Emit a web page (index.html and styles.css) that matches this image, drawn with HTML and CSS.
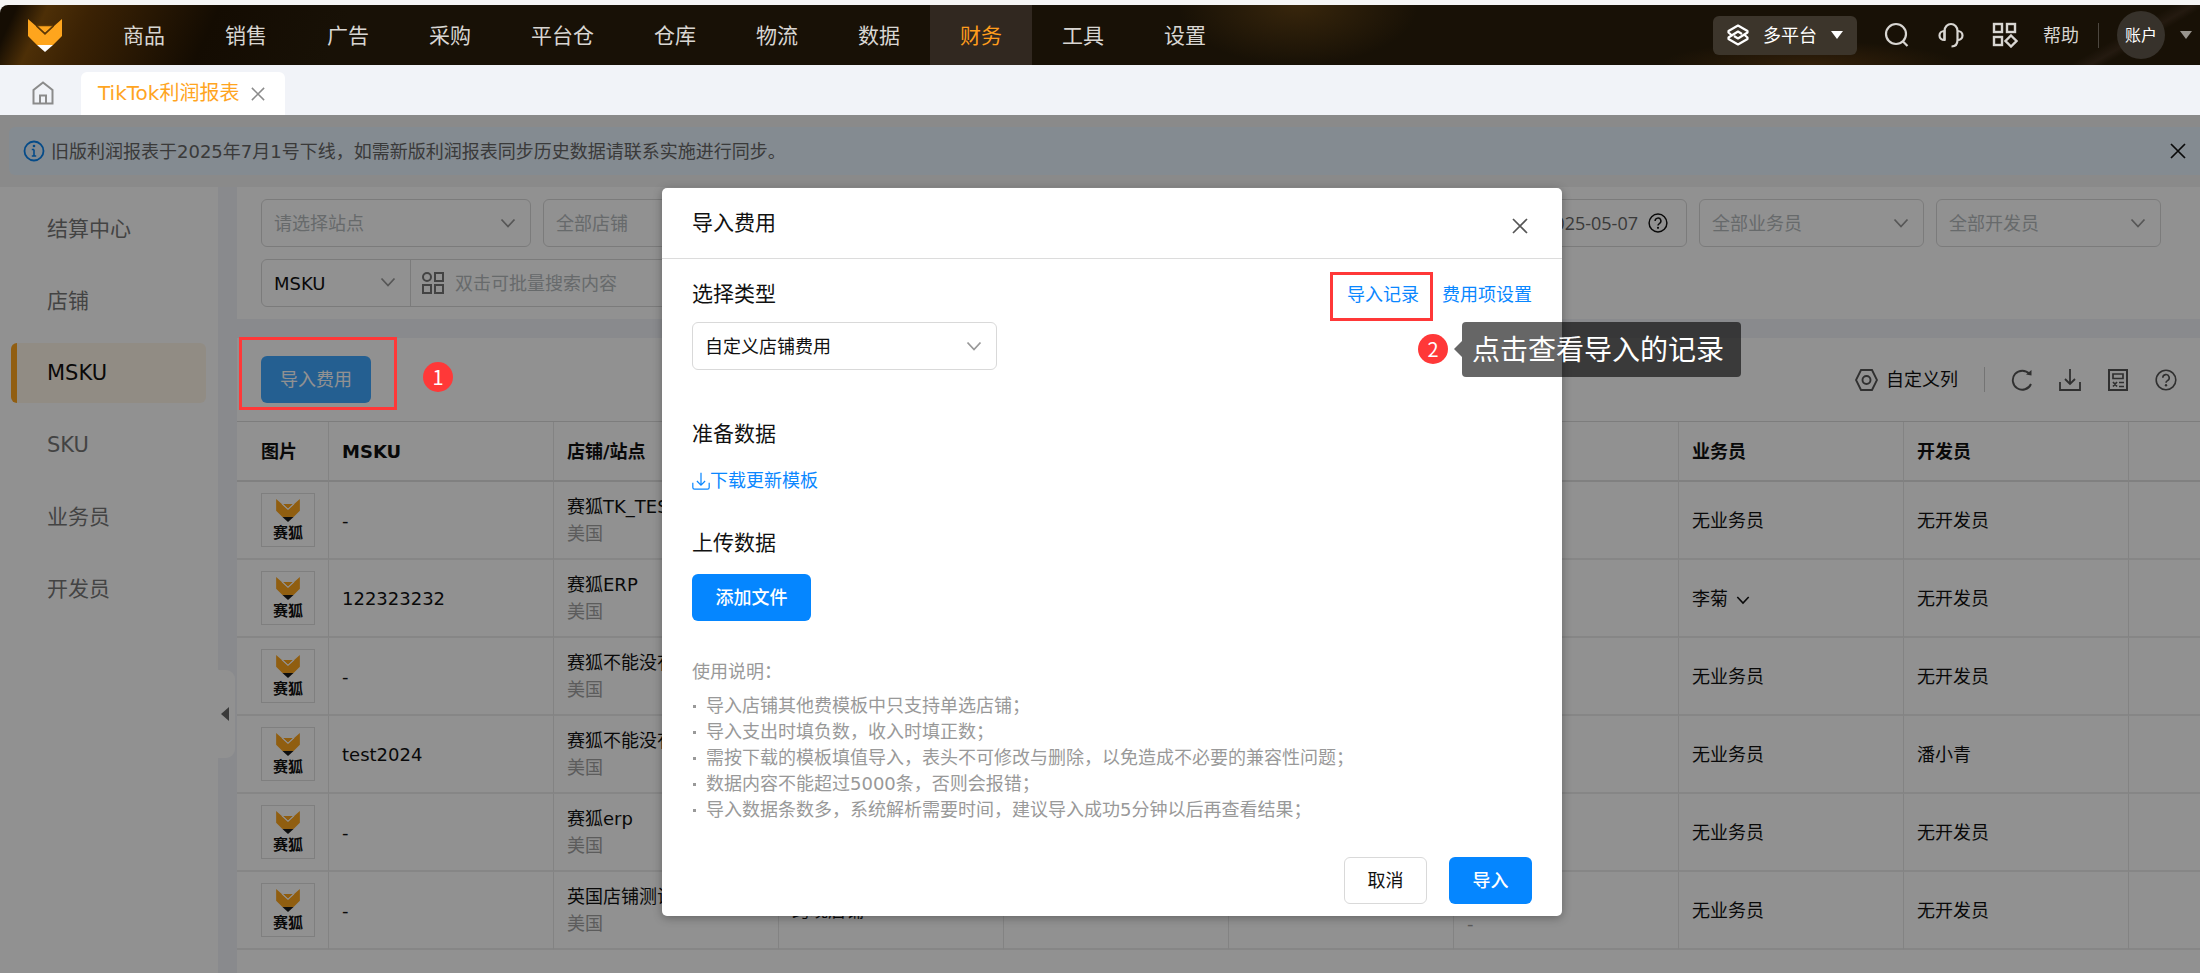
FILE: index.html
```html
<!DOCTYPE html>
<html lang="zh-CN">
<head>
<meta charset="utf-8">
<title>TikTok利润报表</title>
<link rel="stylesheet" href="styles.css">
</head>
<body>
<svg class="defs" aria-hidden="true">
  <symbol id="chevron" viewBox="0 0 16 16"><path d="M1.500 4.500 8 11.500l6.500-7" fill="none" stroke="currentColor" stroke-width="1.800"/></symbol>
  <symbol id="cross" viewBox="0 0 16 16"><path d="M1 1l14 14M15 1 1 15" fill="none" stroke="currentColor" stroke-width="1.700"/></symbol>
  <symbol id="caret" viewBox="0 0 12 8"><path d="M0 0h12L6 8z" fill="currentColor"/></symbol>
  <symbol id="help" viewBox="0 0 22 22"><g fill="none" stroke="currentColor" stroke-width="1.600"><circle cx="11" cy="11" r="9.800"/><path d="M7.800 8.800a3.200 3.200 0 1 1 4.700 2.800c-1 .6-1.500 1.100-1.500 2.200"/></g><circle cx="11" cy="16.300" r="1.200" fill="currentColor"/></symbol>
  <symbol id="download" viewBox="0 0 22 22"><path d="M1 13v8h20v-8M11 0v15M6 10l5 5 5-5" fill="none" stroke="currentColor" stroke-width="1.800"/></symbol>
  <symbol id="fox" viewBox="0 0 34 33"><path class="fox-face" d="M0 0 17 15 34 0v17L25 26H9L0 17z"/><path class="fox-brow" d="M9 6.500h16L17 14z"/><path class="fox-line" d="M9 6.500h16M8.500 7 17 14.800 25.500 7"/><path class="fox-tip" d="M9 26h16l-8 7z"/></symbol>
</svg>

<header class="topbar">
  <a class="brand" href="#" aria-label="赛狐"><svg class="fox fox-lg"><use href="#fox"/></svg></a>
  <nav class="nav">
    <a href="#">商品</a><a href="#">销售</a><a href="#">广告</a><a href="#">采购</a><a href="#">平台仓</a><a href="#">仓库</a><a href="#">物流</a><a href="#">数据</a><a href="#" class="current">财务</a><a href="#">工具</a><a href="#">设置</a>
  </nav>
  <div class="top-tools">
    <button class="platform" type="button">
      <svg width="22" height="22" viewBox="0 0 22 22"><g fill="none" stroke="currentColor" stroke-width="2.200" stroke-linejoin="round"><path d="M5 11.500 1.500 8.500V7L11 1.500 20.500 7v1.500L11 14.500 7 12"/><path d="M17 10.500l3.500 3v1.500L11 20.500 1.500 15v-1.500L11 7.500 15 10"/></g></svg>
      多平台
      <svg class="caret"><use href="#caret"/></svg>
    </button>
    <button class="icon-btn" type="button" aria-label="搜索"><svg width="26" height="26" viewBox="0 0 26 26"><g fill="none" stroke="currentColor" stroke-width="2.200"><circle cx="12" cy="12" r="10"/><path d="m18.500 19 5 5"/></g></svg></button>
    <button class="icon-btn" type="button" aria-label="客服"><svg width="26" height="26" viewBox="0 0 26 26"><g fill="none" stroke="currentColor" stroke-width="2.200"><path d="M6.500 18V9a6.500 7 0 0 1 13 0v9c0 4-2 6.500-6 6.500"/><path d="M6.500 9C3.500 9 1.500 11 1.500 13.500S3.500 18 6.500 18zM19.500 9c3 0 5 2 5 4.500s-2 4.500-5 4.500"/></g></svg></button>
    <button class="icon-btn" type="button" aria-label="应用"><svg width="26" height="26" viewBox="0 0 26 26"><g fill="none" stroke="currentColor" stroke-width="2.400"><rect x="2" y="2" width="8" height="8"/><rect x="15" y="2" width="8" height="8"/><rect x="2" y="15" width="8" height="8"/><path d="m19 13.500 5.500 5.500L19 24.500 13.500 19z"/></g></svg></button>
    <a class="help-link" href="#">帮助</a>
    <span class="bar"></span>
    <button class="avatar" type="button">账户</button>
    <svg class="caret dim"><use href="#caret"/></svg>
  </div>
</header>

<div class="tabs">
  <a class="home" href="#" aria-label="首页"><svg width="22" height="24" viewBox="0 0 22 24"><path d="M1.500 22.500V9L11 1.500 20.500 9v13.500zM8 22v-7.500h6V22" fill="none" stroke="currentColor" stroke-width="2"/></svg></a>
  <div class="tab"><a href="#">TikTok利润报表</a><button type="button" aria-label="关闭标签"><svg class="x14"><use href="#cross"/></svg></button></div>
</div>

<div class="stage">
  <div class="notice">
    <svg class="info" width="22" height="22" viewBox="0 0 22 22"><circle cx="11" cy="11" r="9.500" fill="none" stroke="currentColor" stroke-width="1.800"/><path d="M11 9.500V16M8.800 9.500H11M8.800 16h4.400" fill="none" stroke="currentColor" stroke-width="1.600"/><circle cx="11" cy="6" r="1.300" fill="currentColor"/></svg>
    <span>旧版利润报表于2025年7月1号下线，如需新版利润报表同步历史数据请联系实施进行同步。</span>
    <button type="button" aria-label="关闭提示"><svg class="x16"><use href="#cross"/></svg></button>
  </div>

  <div class="workspace">
    <aside class="side">
      <a href="#">结算中心</a><a href="#">店铺</a><a href="#" class="active">MSKU</a><a href="#">SKU</a><a href="#">业务员</a><a href="#">开发员</a>
      <button class="fold" type="button" aria-label="收起"><svg width="8" height="14" viewBox="0 0 8 14"><path d="M8 0v14L0 7z" fill="currentColor"/></svg></button>
    </aside>

    <main class="main">
      <section class="card filters">
        <div class="filter-row">
          <label class="pick w-site"><select aria-label="站点"><option>请选择站点</option></select><svg><use href="#chevron"/></svg></label>
          <label class="pick w-site"><select aria-label="店铺"><option>全部店铺</option></select><svg><use href="#chevron"/></svg></label>
          <label class="date"><input aria-label="结束日期" value="2025-05-07"><svg><use href="#help"/></svg></label>
          <label class="pick w-staff"><select aria-label="业务员"><option>全部业务员</option></select><svg><use href="#chevron"/></svg></label>
          <label class="pick w-staff"><select aria-label="开发员"><option>全部开发员</option></select><svg><use href="#chevron"/></svg></label>
        </div>
        <div class="filter-row">
          <div class="search">
            <label class="pick dark"><select aria-label="搜索字段"><option>MSKU</option></select><svg><use href="#chevron"/></svg></label>
            <svg class="batch" width="22" height="22" viewBox="0 0 22 22"><g fill="none" stroke="currentColor" stroke-width="2"><circle cx="5" cy="5" r="4"/><rect x="13" y="1" width="8" height="8"/><rect x="1" y="13" width="8" height="8"/><rect x="13" y="13" width="8" height="8"/></g></svg>
            <input aria-label="搜索内容" placeholder="双击可批量搜索内容">
          </div>
        </div>
      </section>

      <section class="card report">
        <div class="toolbar">
          <div class="marked"><button class="import" type="button">导入费用</button><span class="frame frame-import"></span><span class="step step-one">1</span></div>
          <div class="actions">
            <button class="columns" type="button"><svg width="23" height="22" viewBox="0 0 23 22"><g fill="none" stroke="currentColor" stroke-width="1.900"><path d="M6 1h11l5 10-5 10H6L1 11z"/><circle cx="11.500" cy="11" r="4"/></g></svg><span>自定义列</span></button>
            <span class="bar"></span>
            <button type="button" aria-label="刷新"><svg width="22" height="22" viewBox="0 0 22 22"><path d="M18.500 5A9.500 9.500 0 1 0 20 15" fill="none" stroke="currentColor" stroke-width="1.900"/><path d="M15 5.500 20.500 6.500V1z" fill="currentColor"/></svg></button>
            <button type="button" aria-label="下载"><svg class="x22"><use href="#download"/></svg></button>
            <button type="button" aria-label="计算说明"><svg width="22" height="22" viewBox="0 0 22 22"><g fill="none" stroke="currentColor"><path stroke-width="2" d="M2 1h18v20H2z"/><path stroke-width="1.700" d="M6 5h10v4.500H6zM6 13l4 4.500M10 13l-4 4.500M12 13.500h5M12 17.500h5"/></g></svg></button>
            <button type="button" aria-label="帮助"><svg class="x22"><use href="#help"/></svg></button>
          </div>
        </div>
        <table>
          <colgroup><col class="c-img"><col class="c"><col class="c"><col class="c"><col class="c"><col class="c"><col class="c"><col class="c"><col class="c"><col></colgroup>
          <thead><tr><th>图片</th><th>MSKU</th><th>店铺/站点</th><th></th><th></th><th></th><th></th><th>业务员</th><th>开发员</th><th></th></tr></thead>
          <tbody>
            <tr><td><span class="thumb"><svg class="fox"><use href="#fox"/></svg>赛狐</span></td><td>-</td><td>赛狐TK_TEST<small>美国</small></td><td></td><td></td><td></td><td></td><td>无业务员</td><td>无开发员</td><td></td></tr>
            <tr><td><span class="thumb"><svg class="fox"><use href="#fox"/></svg>赛狐</span></td><td>122323232</td><td>赛狐ERP<small>美国</small></td><td></td><td></td><td></td><td></td><td>李菊 <svg class="x14"><use href="#chevron"/></svg></td><td>无开发员</td><td></td></tr>
            <tr><td><span class="thumb"><svg class="fox"><use href="#fox"/></svg>赛狐</span></td><td>-</td><td>赛狐不能没有<small>美国</small></td><td></td><td></td><td></td><td></td><td>无业务员</td><td>无开发员</td><td></td></tr>
            <tr><td><span class="thumb"><svg class="fox"><use href="#fox"/></svg>赛狐</span></td><td>test2024</td><td>赛狐不能没有<small>美国</small></td><td></td><td></td><td></td><td></td><td>无业务员</td><td>潘小青</td><td></td></tr>
            <tr><td><span class="thumb"><svg class="fox"><use href="#fox"/></svg>赛狐</span></td><td>-</td><td>赛狐erp<small>美国</small></td><td></td><td></td><td></td><td></td><td>无业务员</td><td>无开发员</td><td></td></tr>
            <tr><td><span class="thumb"><svg class="fox"><use href="#fox"/></svg>赛狐</span></td><td>-</td><td>英国店铺测试<small>美国</small></td><td>跨境店铺</td><td></td><td></td><td>-<small>-</small></td><td>无业务员</td><td>无开发员</td><td></td></tr>
          </tbody>
        </table>
      </section>
    </main>
  </div>

  <div class="mask">
    <div class="dialog" role="dialog" aria-labelledby="dialog-title">
      <div class="dialog-head"><h2 id="dialog-title">导入费用</h2><button type="button" aria-label="关闭"><svg class="x16"><use href="#cross"/></svg></button></div>
      <div class="dialog-body">
        <div class="type-head">
          <h3><label for="fee-type">选择类型</label></h3>
          <div class="links">
            <span class="marked"><a href="#">导入记录</a><span class="frame frame-record"></span>
              <span class="hint"><span class="step">2</span><span class="tip">点击查看导入的记录</span></span></span>
            <a href="#">费用项设置</a>
          </div>
        </div>
        <div class="pick dark type-pick"><select id="fee-type"><option>自定义店铺费用</option></select><svg><use href="#chevron"/></svg></div>
        <h3 class="prepare">准备数据</h3>
        <a class="template" href="#"><svg width="18" height="18" viewBox="0 0 22 22"><path d="M1 13v6q0 2 2 2h16q2 0 2-2v-6M11 1v15M6 11l5 5 5-5" fill="none" stroke="currentColor" stroke-width="1.500"/></svg>下载更新模板</a>
        <h3 class="upload">上传数据</h3>
        <button class="btn primary add" type="button">添加文件</button>
        <div class="guide">
          <p>使用说明：</p>
          <ul><li>导入店铺其他费模板中只支持单选店铺；</li><li>导入支出时填负数，收入时填正数；</li><li>需按下载的模板填值导入，表头不可修改与删除，以免造成不必要的兼容性问题；</li><li>数据内容不能超过5000条，否则会报错；</li><li>导入数据条数多，系统解析需要时间，建议导入成功5分钟以后再查看结果；</li></ul>
        </div>
        <div class="foot"><button class="btn" type="button">取消</button><button class="btn primary" type="button">导入</button></div>
      </div>
    </div>
  </div>
</div>
</body>
</html>
```

FILE: styles.css
```css
* { box-sizing: border-box; }
body { margin: 0; min-height: 100vh; display: flex; flex-direction: column; padding-top: 5px; background: #f5f5f5; color: #111; font: 18px/27px "DejaVu Sans", "Noto Sans CJK SC", sans-serif; }
button, input, select { font: inherit; color: inherit; border: 0; padding: 0; margin: 0; background: none; }
a { color: inherit; text-decoration: none; }
h2, h3, p, ul { margin: 0; padding: 0; font-size: 21px; font-weight: 400; line-height: 30px; }
svg { display: block; flex: none; }
.defs { position: absolute; width: 0; height: 0; }
.x14 { width: 14px; height: 14px; }
.x16 { width: 16px; height: 16px; }
.x22 { width: 22px; height: 22px; }

.topbar { display: flex; align-items: center; height: 60px; border-radius: 8px 0 0 0; color: #d8d6d2;
  background:
    linear-gradient(150deg, transparent 62%, #241a10 68%, transparent 72%) right / 240px 100% no-repeat,
    radial-gradient(ellipse 120px 60px at 1298px 0, #38260c, transparent),
    radial-gradient(ellipse 150px 24px at 1810px 100%, #33200a, transparent),
    linear-gradient(115deg, #150d03 0, #150d03 16px, #4d2f07 44px, #3b2204 84px, #140c02 200px, #181106 320px); }
.brand { width: 93px; padding-left: 28px; }
.fox-lg { width: 34px; height: 33px; --tip: #fff; --line: #5c3806; }
.fox-face { fill: #fea51d; }
.fox-brow { fill: #fea51d; }
.fox-line { fill: none; stroke: var(--line, #fff); stroke-width: 1.600; }
.fox-tip { fill: var(--tip, #1a1a1a); }
.nav { display: flex; font-size: 21px; line-height: 60px; }
.nav a { height: 60px; padding: 1px 30px 0; }
.nav .current { background: #312820; color: #ff9d1c; }
.top-tools { display: flex; align-items: center; margin-left: auto; padding-right: 8px; }
.platform { display: flex; align-items: center; gap: 14px; height: 39px; padding: 0 14px; border-radius: 6px; background: #3c352b; color: #fff; margin-right: 27px; }
.caret { width: 12px; height: 8px; }
.dim { color: #98948d; }
.icon-btn { margin-right: 28px; }
.help-link { margin-right: 19px; margin-left: -3px; }
.bar { width: 1px; height: 25px; background: #4d473f; }
.avatar { width: 48px; height: 48px; margin: 0 15px 0 18px; border-radius: 50%; background: #37322b; color: #fff; font-size: 16px; }

.tabs { display: flex; align-items: flex-end; height: 50px; background: #f1f3f8; }
.home { width: 81px; padding: 0 0 10px 32px; color: #8b8b8b; }
.tab { display: flex; align-items: center; gap: 12px; height: 43px; padding: 0 20px 0 17px; border-radius: 6px 6px 0 0; background: #fff; color: #ffa51f; font-size: 20px; }
.tab button { color: #8b8b8b; }

.stage { position: relative; flex: 1; display: flex; flex-direction: column; background: #f2f2f2; }
.notice { display: flex; align-items: center; gap: 6px; height: 48px; margin: 12px 0 12px 9px; padding: 0 14px; border-radius: 6px 0 0 6px; background: #e8f4ff; color: #666; }
.notice .info { color: #0a84f0; }
.notice button { margin-left: auto; color: #111; }
.workspace { flex: 1; display: flex; gap: 19px; background: #f1f3f8; }
.side { position: relative; width: 218px; padding: 12px 12px 0 11px; display: flex; flex-direction: column; gap: 12px; background: #fff; color: #777; font-size: 21px; line-height: 60px; }
.side a { padding-left: 36px; }
.side .active { padding-left: 30px; border-left: 6px solid #ffa51f; border-radius: 6px; background: #fff6e8; color: #111; }
.fold { position: absolute; left: 100%; top: 483px; width: 17px; height: 88px; padding-left: 3px; border-radius: 0 9px 9px 0; background: #fff; color: #666; }

.main { flex: 1; min-width: 0; display: flex; flex-direction: column; gap: 19px; }
.card { background: #fff; }
.filters { display: flex; flex-direction: column; gap: 12px; padding: 12px 39px 12px 24px; }
.filter-row { display: flex; gap: 12px; }
.pick { position: relative; display: flex; height: 48px; border: 1px solid #d9d9d9; border-radius: 6px; color: #b5babd; }
.pick select { flex: 1; min-width: 0; padding: 0 36px 0 12px; appearance: none; }
.pick svg { position: absolute; right: 14px; top: 15px; width: 16px; height: 16px; color: #999; pointer-events: none; }
.dark { color: #111; }
.w-site { width: 270px; }
.w-staff { width: 225px; }
.date { flex: 1; display: flex; align-items: center; gap: 10px; height: 48px; padding: 0 18px; border: 1px solid #d9d9d9; border-radius: 6px; }
.date input { flex: 1; min-width: 0; text-align: right; color: #666; font-family: "Open Sans", sans-serif; }
.date svg { width: 20px; height: 20px; }
.search { display: flex; align-items: center; width: 552px; height: 48px; border: 1px solid #d9d9d9; border-radius: 6px; }
.search .pick { width: 149px; border-width: 0 1px 0 0; border-radius: 0; }
.search .batch { margin: 0 11px; color: #777; }
.search input { flex: 1; min-width: 0; }
.search input::placeholder { color: #b5babd; opacity: 1; }

.report { flex: 1; }
.toolbar { display: flex; justify-content: space-between; align-items: center; height: 83px; padding: 0 23px 0 24px; }
.marked { position: relative; }
.import { display: block; width: 110px; height: 47px; border-radius: 6px; background: #40a7ff; color: #fff; }
.frame { position: absolute; z-index: 3; border: 3px solid #ff3838; pointer-events: none; }
.frame-import { left: -22px; top: -19px; width: 158px; height: 73px; }
.step { flex: none; width: 30px; height: 30px; border-radius: 50%; background: #ff3838; color: #fff; text-align: center; line-height: 30px; font-family: "Noto Sans CJK SC", sans-serif; font-size: 20px; }
.step-one { position: absolute; z-index: 3; left: 162px; top: 6px; }
.actions { display: flex; align-items: center; gap: 26px; color: #555; }
.columns { display: flex; align-items: center; gap: 8px; }
.columns span { color: #111; }
.actions .bar { background: #ccc; }

table { width: 100%; table-layout: fixed; border-collapse: separate; border-spacing: 0; border-top: 1px solid #dcdcdc; }
.c-img { width: 92px; }
.c { width: 225px; }
th, td { padding: 0 12px 0 13px; border-right: 1px solid #e6e6e6; border-bottom: 2px solid #ebebeb; text-align: left; white-space: nowrap; overflow: hidden; }
th { height: 60px; border-bottom-color: #e2e2e2; }
td { height: 78px; }
th:first-child, td:first-child { padding: 0 0 0 24px; }
th:last-child, td:last-child { border-right: 0; }
td small { display: block; font-size: 18px; color: #a3a3a3; }
td .x14 { display: inline-block; margin-left: 2px; vertical-align: middle; }
.thumb { display: flex; flex-direction: column; align-items: center; width: 54px; height: 54px; padding-top: 5px; border: 1px solid #e0e0e0; font-size: 15px; font-weight: 700; line-height: 22px; }
.thumb .fox { width: 24px; height: 23px; }

.mask { position: absolute; inset: 0; z-index: 2; display: flex; justify-content: center; align-items: flex-start; padding: 73px 0 0 24px; background: rgba(0, 0, 0, .43); }
.dialog { width: 900px; border-radius: 5px; background: #fff; box-shadow: 0 2px 10px rgba(0, 0, 0, .3); }
.dialog-head { display: flex; justify-content: space-between; align-items: center; height: 71px; padding: 0 34px 0 30px; border-bottom: 1px solid #dcdcdc; }
.dialog-head button { margin-top: 6px; color: #555; }
.dialog-body { padding: 20px 30px 12px; }
.type-head { display: flex; justify-content: space-between; align-items: center; height: 30px; }
.links { display: flex; gap: 23px; color: #0a87ff; }
.frame-record { left: -17px; top: -9px; width: 103px; height: 49px; }
.hint { position: absolute; z-index: 4; left: 71px; top: 41px; display: flex; align-items: center; gap: 14px; white-space: nowrap; }
.tip { position: relative; height: 55px; padding: 3px 17px 0 10px; border-radius: 4px; background: rgba(0, 0, 0, .6); color: #fff; font-size: 28px; line-height: 52px; }
.tip::before { content: ""; position: absolute; right: 100%; top: 19px; border: 8px solid transparent; border-left: 0; border-right-color: rgba(0, 0, 0, .6); }
.type-pick { width: 305px; margin-top: 13px; }
.prepare { margin-top: 49px; }
.template { display: flex; align-items: center; width: max-content; margin-top: 18px; color: #0a87ff; }
.upload { margin-top: 34px; }
.btn { width: 83px; height: 47px; border: 1px solid #d9d9d9; border-radius: 6px; background: #fff; }
.primary { border: 0; background: #0586ff; color: #fff; font-weight: 500; }
.add { display: block; width: 119px; margin-top: 16px; }
.guide { margin-top: 38px; color: #999; }
.guide p, .guide ul { font-size: 18px; line-height: 26px; }
.guide ul { margin-top: 8px; list-style: none; }
.guide li { display: flex; align-items: center; gap: 10px; }
.guide li::before { content: ""; width: 3px; height: 3px; margin-left: 1px; background: #999; }
.foot { display: flex; justify-content: flex-end; gap: 22px; margin-top: 34px; }
```
